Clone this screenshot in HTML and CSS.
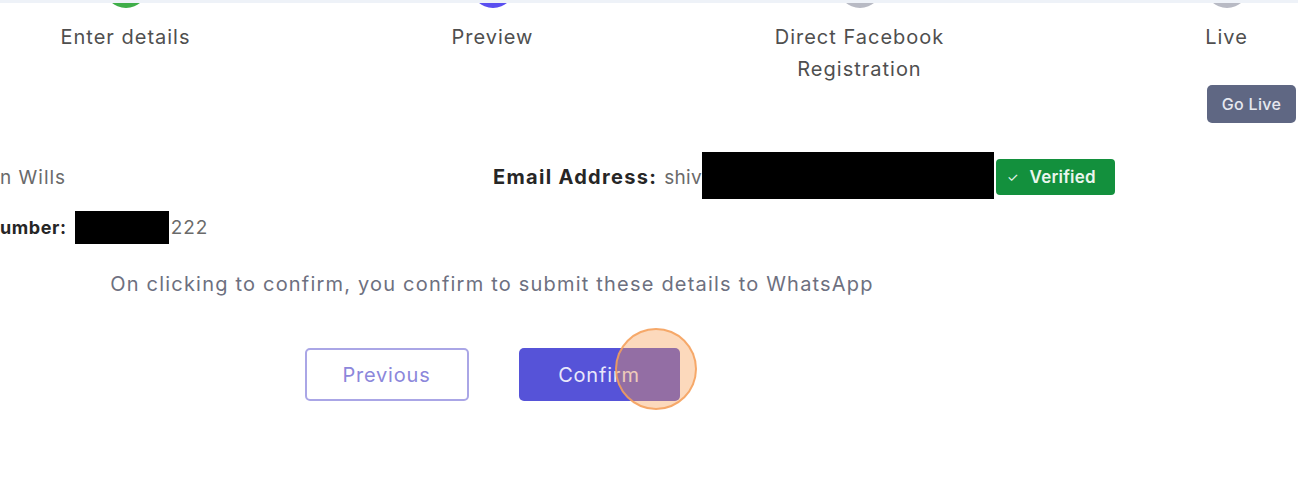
FILE: index.html
```html
<!DOCTYPE html>
<html>
<head>
<meta charset="utf-8">
<link rel="stylesheet" href="styles.css">
</head>
<body>
<div class="strip"></div>
<div class="steps">
  <div class="step">
    <div class="peek"><div class="dot dot-green"></div></div>
    <div class="step-label">Enter details</div>
  </div>
  <div class="step">
    <div class="peek"><div class="dot dot-blue"></div></div>
    <div class="step-label">Preview</div>
  </div>
  <div class="step">
    <div class="peek"><div class="dot dot-grey"></div></div>
    <div class="step-label">Direct Facebook<br>Registration</div>
  </div>
  <div class="step">
    <div class="peek"><div class="dot dot-grey"></div></div>
    <div class="step-label">Live</div>
    <button class="golive">Go Live</button>
  </div>
</div>

<div class="main">
  <div class="info">
    <div class="row row1">
      <div class="cell name"><span class="val">n Wills</span></div>
      <div class="cell email">
        <span class="lbl lbl-email">Email Address:</span>
        <span class="val val-email">shiv</span><span class="redact redact-email"></span>
        <span class="badge"><span class="tick">✓</span>Verified</span>
      </div>
    </div>
    <div class="row row2">
      <div class="cell phone">
        <span class="lbl">umber:</span>
        <span class="redact redact-phone"></span><span class="val">222</span>
      </div>
    </div>
  </div>
  <p class="note">On clicking to confirm, you confirm to submit these details to WhatsApp</p>
  <div class="actions">
    <button class="btn btn-outline">Previous</button>
    <button class="btn btn-primary">Confirm<span class="click"></span></button>
  </div>
</div>
</body>
</html>
```

FILE: styles.css
```css
* { box-sizing: border-box; }
html, body { margin: 0; padding: 0; background: #fff; }
body {
  font-family: "Inter", "Liberation Sans", sans-serif;
  letter-spacing: 1px;
  width: 1298px;
  height: 481px;
  overflow: hidden;
}
.strip { height: 3px; background: #eef2f8; }

.steps {
  display: flex;
  margin-left: -58px;
}
.step {
  width: 367px;
  flex: none;
  display: flex;
  flex-direction: column;
  align-items: center;
}
.peek {
  height: 5px;
  width: 44px;
  overflow: hidden;
}
.dot {
  width: 44px;
  height: 44px;
  border-radius: 50%;
  margin-top: -39px;
}
.dot-green { background: #3fae49; }
.dot-blue { background: #5a4ff0; }
.dot-grey { background: #b8bac4; }
.step-label {
  margin-top: 13px;
  font-size: 20px;
  line-height: 32px;
  color: #4f4f4f;
  text-align: center;
  white-space: nowrap;
}
.golive {
  margin-top: 32px;
  margin-left: 50px;
  width: 89px;
  height: 38px;
  border: none;
  border-radius: 5px;
  background: #5f6783;
  color: #e6e8ef;
  font-family: inherit;
  font-size: 16px;
  font-weight: 500;
  letter-spacing: 0.3px;
  padding: 0;
}

.main {
  width: 984px;
  margin-top: 29px;
}
.row {
  display: flex;
  align-items: center;
}
.row1 { height: 50px; }
.row2 { height: 34px; margin-top: 8px; }
.cell { display: flex; align-items: center; flex: none; white-space: nowrap; }
.name { width: 493px; }
.lbl { font-weight: 700; color: #262626; font-size: 18px; letter-spacing: 0.6px; }
.lbl-email { font-size: 20px; letter-spacing: 1.3px; }
.val { color: #6a6a6a; font-size: 19px; }
.val-email { margin-left: 7px; letter-spacing: 0.3px; }
.redact { display: inline-block; background: #000; }
.redact-email { width: 292px; height: 47px; margin-top: -4px; }
.redact-phone { width: 94px; height: 33px; margin-left: 8px; margin-right: 2px; }
.badge {
  display: inline-flex;
  align-items: center;
  margin-left: 2px;
  width: 119px;
  height: 36px;
  padding-left: 11px;
  border-radius: 4px;
  background: #13903d;
  color: #eaf6ee;
  font-size: 17px;
  font-weight: 600;
  letter-spacing: 0.2px;
}
.tick { font-size: 13px; margin-right: 11px; font-weight: 400; }

.note {
  margin: 28px 0 0;
  text-align: center;
  font-size: 20px;
  line-height: 24px;
  letter-spacing: 1.2px;
  color: #6d7080;
}
.actions {
  display: flex;
  justify-content: center;
  gap: 50px;
  margin-top: 52px;
}
.btn {
  position: relative;
  height: 53px;
  border-radius: 5px;
  font-family: inherit;
  font-size: 20px;
  letter-spacing: 0.8px;
  padding: 0;
}
.btn-outline {
  width: 164px;
  background: #fff;
  border: 2px solid #aaa6e6;
  color: #8c87db;
}
.btn-primary {
  width: 161px;
  background: #5653d8;
  border: none;
  color: #e9e8fb;
}
.click {
  position: absolute;
  left: 96px;
  top: -20px;
  width: 82px;
  height: 82px;
  border-radius: 50%;
  background: rgba(247, 155, 80, 0.38);
  border: 2px solid rgba(245, 160, 90, 0.85);
}
```
